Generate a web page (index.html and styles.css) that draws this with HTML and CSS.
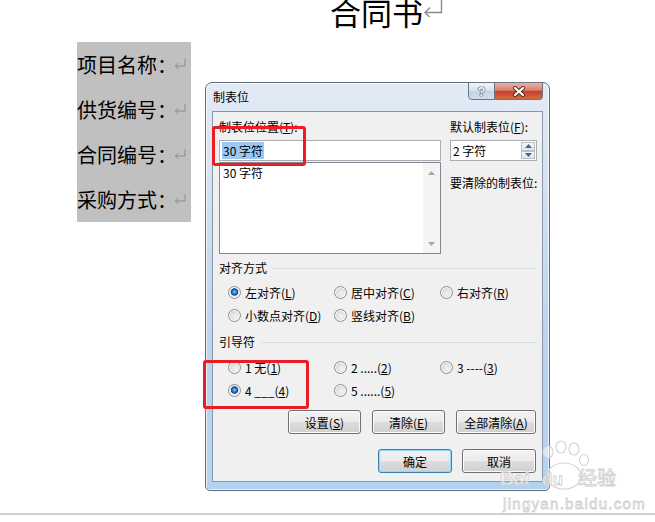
FILE: index.html
```html
<!DOCTYPE html>
<html lang="zh-CN">
<head>
<meta charset="UTF-8">
<meta name="viewport" content="width=device-width, initial-scale=1.0">
<title>制表位</title>
<link rel="stylesheet" href="styles.css">
</head>
<body>
<div class="page">
    <h1 class="doc-title">合同书<svg class="ret-big" width="20" height="17" viewBox="0 0 20 17"><path d="M18.5 0 V12.5 H2" fill="none" stroke="#8a8a8a" stroke-width="1.4"/><path d="M7 7.5 L2 12.5 L7 17.5" fill="none" stroke="#8a8a8a" stroke-width="1.4"/></svg></h1>
    <div class="fields">
        <p>项目名称：<svg class="ret" width="12" height="11" viewBox="0 0 12 11"><path d="M11 0 V7 H1.5 M4.5 4 L1.5 7 L4.5 10" fill="none" stroke="#8c8c8c"/></svg></p>
        <p>供货编号：<svg class="ret" width="12" height="11" viewBox="0 0 12 11"><path d="M11 0 V7 H1.5 M4.5 4 L1.5 7 L4.5 10" fill="none" stroke="#8c8c8c"/></svg></p>
        <p>合同编号：<svg class="ret" width="12" height="11" viewBox="0 0 12 11"><path d="M11 0 V7 H1.5 M4.5 4 L1.5 7 L4.5 10" fill="none" stroke="#8c8c8c"/></svg></p>
        <p>采购方式：<svg class="ret" width="12" height="11" viewBox="0 0 12 11"><path d="M11 0 V7 H1.5 M4.5 4 L1.5 7 L4.5 10" fill="none" stroke="#8c8c8c"/></svg></p>
    </div>
</div>

<div class="dialog">
    <div class="titlebar">
        <span class="caption">制表位</span>
        <div class="caption-btns">
            <span class="cbtn help">?</span>
            <span class="cbtn close"><svg width="14" height="11" viewBox="0 0 14 11"><path d="M3 2 L11 9 M11 2 L3 9" stroke="#5a2a24" stroke-width="4" stroke-linecap="round"/><path d="M3 2 L11 9 M11 2 L3 9" stroke="#fff" stroke-width="2.2" stroke-linecap="round"/></svg></span>
        </div>
    </div>
    <div class="client">
        <div class="top">
            <div>
                <span class="label">制表位位置(<u>T</u>):</span>
                <div class="edit"><span class="sel">30 字符</span></div>
                <div class="list">
                    <span class="item">30 字符</span>
                    <div class="scroll">
                        <svg width="7" height="4" viewBox="0 0 7 4"><path d="M0 4 L3.5 0 L7 4 Z" fill="#a7a7a7"/></svg>
                        <svg width="7" height="4" viewBox="0 0 7 4"><path d="M0 0 L3.5 4 L7 0 Z" fill="#a7a7a7"/></svg>
                    </div>
                </div>
            </div>
            <div>
                <span class="label">默认制表位(<u>F</u>):</span>
                <div class="spin">
                    <span class="spin-text">2 字符</span>
                    <div class="spin-btns">
                        <span><svg width="7" height="4" viewBox="0 0 7 4"><path d="M0 4 L3.5 0 L7 4 Z" fill="#4d6185"/></svg></span>
                        <span><svg width="7" height="4" viewBox="0 0 7 4"><path d="M0 0 L3.5 4 L7 0 Z" fill="#4d6185"/></svg></span>
                    </div>
                </div>
                <span class="label clear-label">要清除的制表位:</span>
            </div>
        </div>

        <div class="group">
            <div class="group-head">对齐方式</div>
            <div class="radios">
                <span class="radio checked"><i></i><span>左对齐(<u>L</u>)</span></span>
                <span class="radio"><i></i><span>居中对齐(<u>C</u>)</span></span>
                <span class="radio"><i></i><span>右对齐(<u>R</u>)</span></span>
                <span class="radio"><i></i><span>小数点对齐(<u>D</u>)</span></span>
                <span class="radio"><i></i><span>竖线对齐(<u>B</u>)</span></span>
            </div>
        </div>

        <div class="group leader">
            <div class="group-head">引导符</div>
            <div class="radios">
                <span class="radio"><i></i><span>1 无(<u>1</u>)</span></span>
                <span class="radio"><i></i><span>2 .....(<u>2</u>)</span></span>
                <span class="radio"><i></i><span>3 ----(<u>3</u>)</span></span>
                <span class="radio checked"><i></i><span>4 ___(<u>4</u>)</span></span>
                <span class="radio"><i></i><span>5 ......(<u>5</u>)</span></span>
            </div>
        </div>

        <div class="btn-row">
            <span class="btn"><span>设置(<u>S</u>)</span></span>
            <span class="btn"><span>清除(<u>E</u>)</span></span>
            <span class="btn wide"><span>全部清除(<u>A</u>)</span></span>
        </div>
        <div class="btn-row main">
            <span class="btn default">确定</span>
            <span class="btn">取消</span>
        </div>
    </div>
</div>

<div class="mark mark-1"></div>
<div class="mark mark-2"></div>

<div class="watermark">
    <svg class="paw" width="60" height="50" viewBox="0 0 60 50">
        <g fill="rgba(255,255,255,0.5)" stroke="#d6d6d6" stroke-width="1.2">
            <ellipse cx="14" cy="12" rx="5" ry="6"/>
            <ellipse cx="27" cy="7" rx="5" ry="6"/>
            <ellipse cx="40" cy="9" rx="5" ry="6"/>
            <ellipse cx="50" cy="20" rx="4.5" ry="5.5"/>
            <ellipse cx="30" cy="36" rx="17" ry="13"/>
        </g>
    </svg>
    <div class="wm-row">
        <span class="wm-bai">Bai</span><span class="wm-du">du</span><span class="wm-jy">经验</span>
    </div>
    <div class="wm-url">jingyan.baidu.com</div>
</div>
</body>
</html>
```

FILE: styles.css
```css
body {
    margin: 0;
    width: 655px;
    height: 522px;
    position: relative;
    overflow: hidden;
    background-color: #fff;
    font-family: "Noto Sans CJK SC", sans-serif;
    color: #000;
}

/* the word document behind the dialog */
.page {
    height: 517px;
    border-bottom: 2px solid #cfcfcf;
}
.doc-title {
    margin: -4px 0 0 330px;
    height: 46px;
    font-size: 31px;
    font-weight: normal;
    line-height: 31px;
    white-space: nowrap;
}
.ret-big {
    vertical-align: top;
    margin-top: 4px;
}
.fields {
    margin-left: 77px;
    width: 114px;
    background-color: #c0c0c0;
    font-size: 20px;
}
.fields p {
    margin: 0;
    height: 45px;
    line-height: 45px;
    white-space: nowrap;
}
.ret {
    vertical-align: 3px;
    margin-left: -3px;
}

/* dialog window */
.dialog {
    position: absolute;
    left: 205px;
    top: 82px;
    width: 345px;
    height: 409px;
    box-sizing: border-box;
    border: 1px solid #5f6d7c;
    border-radius: 7px 7px 5px 5px;
    padding: 0 6px 8px;
    background: linear-gradient(#e3ebf5, #d3e2f2 25%, #bcd5ef 60%, #b3d2f2);
    box-shadow: inset 0 0 0 1px rgba(255, 255, 255, 0.7);
    font-size: 12px;
}
.titlebar {
    height: 28px;
    display: flex;
    justify-content: space-between;
    align-items: flex-start;
}
.caption {
    line-height: 28px;
    padding-left: 1px;
}
.caption-btns {
    display: flex;
    margin-top: -1px;
}
.cbtn {
    height: 18px;
    box-sizing: border-box;
    border: 1px solid #6b7580;
    display: flex;
    align-items: center;
    justify-content: center;
}
.help {
    width: 27px;
    border-radius: 0 0 0 4px;
    background: linear-gradient(#eef3f9, #d7e2ee 50%, #c3d2e3 51%, #d2deeb);
    color: #fff;
    font-family: "Liberation Sans", sans-serif;
    font-weight: bold;
    font-size: 13px;
    text-shadow: 0 0 1px #2c3a4a, 0 0 1px #2c3a4a, 0 0 1px #2c3a4a;
}
.close {
    width: 48px;
    border-left: none;
    border-radius: 0 0 4px 0;
    background: linear-gradient(#eab0a4, #d98172 45%, #c7412e 52%, #d4683f);
}

.client {
    height: 371px;
    box-sizing: border-box;
    border: 1px solid #8b98a8;
    background-color: #f0f0f0;
    padding: 7px 5px 0 6px;
}
.top {
    display: grid;
    grid-template-columns: 222px 87px;
    column-gap: 9px;
}
.label {
    display: block;
    height: 16px;
    line-height: 16px;
    white-space: nowrap;
}
.edit {
    margin-top: 5px;
    height: 21px;
    box-sizing: border-box;
    border: 1px solid #abadb3;
    background-color: #fff;
    padding: 1px 2px;
    line-height: 17px;
}
.sel {
    background-color: #9ec8f2;
    padding: 0 1px;
}
.list {
    margin-top: 1px;
    height: 92px;
    box-sizing: border-box;
    border: 1px solid #82878f;
    background-color: #fff;
    display: flex;
    justify-content: space-between;
}
.item {
    padding: 2px 3px;
    line-height: 16px;
}
.scroll {
    width: 17px;
    background-color: #f4f4f4;
    display: flex;
    flex-direction: column;
    justify-content: space-between;
    align-items: center;
    padding: 8px 0 7px;
}
.spin {
    margin-top: 5px;
    height: 21px;
    box-sizing: border-box;
    border: 1px solid #abadb3;
    background-color: #fff;
    display: flex;
    justify-content: space-between;
}
.spin-text {
    padding-left: 2px;
    line-height: 19px;
}
.spin-btns {
    width: 16px;
    padding: 1px;
    display: flex;
    flex-direction: column;
    box-sizing: border-box;
}
.spin-btns span {
    flex: 1;
    border: 1px solid #b8c0ca;
    background: linear-gradient(#f6f8fa, #dfe5ec);
    display: flex;
    align-items: center;
    justify-content: center;
}
.clear-label {
    margin-top: 14px;
}

.group {
    margin-top: 6px;
}
.group.leader {
    margin-top: 7px;
}
.group-head {
    display: flex;
    align-items: center;
    gap: 6px;
    height: 16px;
    line-height: 16px;
}
.group-head::after {
    content: "";
    flex: 1;
    height: 1px;
    background-color: #d5dfe5;
}
.radios {
    display: grid;
    grid-template-columns: 106px 106px auto;
    grid-auto-rows: 23px;
    align-items: center;
    padding-left: 9px;
    margin-top: 5px;
}
.leader .radios {
    margin-top: 6px;
}
.radio {
    display: flex;
    align-items: center;
    gap: 4px;
    white-space: nowrap;
}
.radio i {
    width: 13px;
    height: 13px;
    box-sizing: border-box;
    border: 1px solid #8e8f8f;
    border-radius: 50%;
    background: radial-gradient(circle at 60% 60%, #f4f4f4 0, #d6d6d6 70%, #c8c8c8);
    box-shadow: inset 0 0 0 1px #fafafa;
}
.radio.checked i {
    background: radial-gradient(circle at 50% 45%, #a9dcff 0, #2b86d6 1.6px, #0d4d8e 3.4px, #f2f2f2 4.2px, #d0d0d0 6px);
}

.btn-row {
    display: flex;
    justify-content: flex-end;
    gap: 11px;
    margin: 8px 1px 0 0;
}
.btn-row.main {
    gap: 10px;
    margin-top: 15px;
}
.btn {
    width: 73px;
    height: 24px;
    box-sizing: border-box;
    border: 1px solid #707070;
    border-radius: 3px;
    background: linear-gradient(#f2f2f2, #ebebeb 50%, #dddddd 50%, #cfcfcf);
    box-shadow: inset 0 0 0 1px #fbfbfb;
    display: flex;
    align-items: center;
    justify-content: center;
    white-space: nowrap;
}
.btn.wide {
    width: 80px;
}
.btn-row.main .btn {
    width: 74px;
}
.btn.default {
    border-color: #3c7fb1;
    box-shadow: inset 0 0 0 1px #8fd8f8, inset 0 0 2px 1px #c8ecfc;
}

/* red annotation boxes drawn over the screenshot */
.mark {
    position: absolute;
    box-sizing: border-box;
    border: 3px solid #ec1c24;
    border-radius: 3px;
}
.mark-1 {
    left: 212px;
    top: 126px;
    width: 94px;
    height: 40px;
}
.mark-2 {
    left: 203px;
    top: 360px;
    width: 106px;
    height: 49px;
}

/* baidu jingyan watermark */
.watermark {
    position: absolute;
    left: 500px;
    top: 432px;
    width: 125px;
    font-family: "Liberation Sans", sans-serif;
    color: rgba(255, 255, 255, 0.55);
    -webkit-text-stroke: 0.8px #cfcfcf;
}
.paw {
    position: absolute;
    left: 34px;
    top: 8px;
}
.wm-row {
    position: relative;
    display: flex;
    align-items: baseline;
    margin-top: 34px;
    height: 22px;
    white-space: nowrap;
}
.wm-bai {
    font-size: 19px;
    font-weight: bold;
    width: 42px;
}
.wm-du {
    font-size: 17px;
    font-weight: bold;
    width: 36px;
}
.wm-jy {
    font-family: "Noto Sans CJK SC", sans-serif;
    font-size: 19px;
    line-height: 22px;
}
.wm-url {
    position: relative;
    margin: 8px 0 0 3px;
    font-size: 15px;
    letter-spacing: 1.3px;
    line-height: 16px;
    white-space: nowrap;
}
```
